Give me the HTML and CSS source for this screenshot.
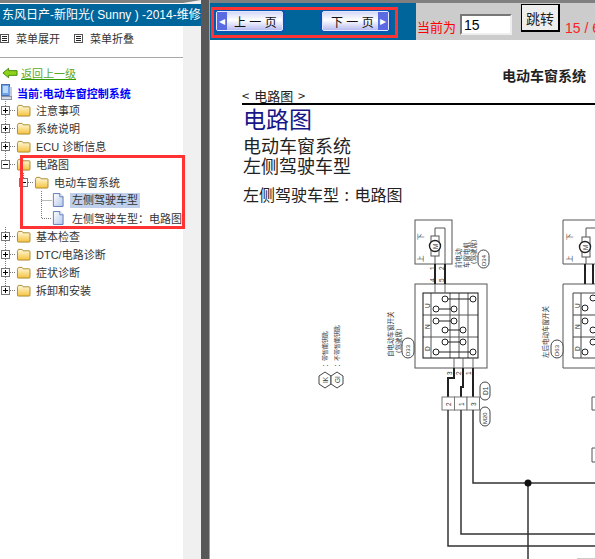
FILE: index.html
```html
<!doctype html>
<html lang="zh">
  <head>
    <meta charset="UTF-8" />
    <title>电动车窗系统</title>
    <link rel="stylesheet" href="styles.css">
  </head>
  <body>
    <svg class="defs" width="0" height="0">
      <defs>
        <linearGradient id="folderFill" x1="0" y1="0" x2="0" y2="1">
          <stop offset="0" stop-color="#fffbe0" />
          <stop offset="1" stop-color="#f5c23c" />
        </linearGradient>
        <linearGradient id="pageFill" x1="0" y1="0" x2="1" y2="1">
          <stop offset="0" stop-color="#ffffff" />
          <stop offset="1" stop-color="#b4c8ec" />
        </linearGradient>
        <symbol id="folder" viewBox="0 0 16 14">
          <path d="M1.500 3.500 L2.500 1.500 H6.500 L7.500 3 H14 Q15 3 15 4 V12 Q15 13 14 13 H2.500 Q1.500 13 1.500 12 Z" fill="url(#folderFill)" stroke="#a8862c" />
        </symbol>
        <symbol id="page" viewBox="0 0 13 15">
          <path d="M1.500 .5 H8.500 L12 4 V14.500 H1.500 Z" fill="url(#pageFill)" stroke="#5a76b4" />
          <path d="M8.500 .5 V4 H12" fill="#fff" stroke="#5a76b4" />
        </symbol>
        <symbol id="menuBox" viewBox="0 0 9 9">
          <rect x=".5" y=".5" width="8" height="8" fill="#fff" stroke="#555" />
          <path d="M2 2.500 H7 M2 4.500 H7 M2 6.500 H7" stroke="#222" />
        </symbol>
        <symbol id="plus" viewBox="0 0 15 18">
          <path d="M4.500 0 V18 M9 9.500 H15" stroke="#777" stroke-dasharray="1 1" />
          <rect x=".5" y="5.500" width="8" height="8" fill="#fff" stroke="#777" />
          <path d="M2 9.500 H7 M4.500 7 V12" stroke="#000" />
        </symbol>
        <symbol id="plusLast" viewBox="0 0 15 18">
          <path d="M4.500 0 V9 M9 9.500 H15" stroke="#777" stroke-dasharray="1 1" />
          <rect x=".5" y="5.500" width="8" height="8" fill="#fff" stroke="#777" />
          <path d="M2 9.500 H7 M4.500 7 V12" stroke="#000" />
        </symbol>
        <symbol id="minus" viewBox="0 0 15 18">
          <path d="M4.500 0 V6 M9 9.500 H15" stroke="#777" stroke-dasharray="1 1" />
          <rect x=".5" y="5.500" width="8" height="8" fill="#fff" stroke="#777" />
          <path d="M2 9.500 H7" stroke="#000" />
        </symbol>
        <symbol id="branch" viewBox="0 0 12 18">
          <path d="M1.500 0 V18 M1.500 9.500 H12" stroke="#777" stroke-dasharray="1 1" />
        </symbol>
        <symbol id="branchLast" viewBox="0 0 12 18">
          <path d="M1.500 0 V9.500 H12" fill="none" stroke="#777" stroke-dasharray="1 1" />
        </symbol>
      </defs>
    </svg>

    <aside class="sidebar">
      <div class="title-bar">东风日产-新阳光( Sunny ) -2014-维修手册</div>
      <div class="menu-tools">
        <span class="menu-tool"><svg width="9" height="9"><use href="#menuBox" /></svg>菜单展开</span>
        <span class="menu-tool"><svg width="9" height="9"><use href="#menuBox" /></svg>菜单折叠</span>
      </div>
      <div class="back-row">
        <svg width="16" height="12" viewBox="0 0 17 12">
          <path d="M1 6 L7 1 V3.500 H16 V8.500 H7 V11 Z" fill="#8fd21a" stroke="#3c8a00" />
        </svg>
        <a class="back-link" href="#">返回上一级</a>
      </div>
      <div class="current-row">
        <svg width="15" height="18" viewBox="0 0 15 18">
          <rect x="1.500" y=".5" width="8" height="11" fill="#6fa4ea" stroke="#4a70b0" />
          <rect x="3" y="2" width="5" height="7" fill="#bcd8fa" />
          <rect x="9.500" y="3" width="2.500" height="10" fill="#c2cce0" />
          <rect x="1.500" y="12.500" width="10" height="3" fill="#d8dce6" stroke="#8a92a8" />
        </svg>
        <strong>当前:电动车窗控制系统</strong>
      </div>

      <ul class="tree">
        <li class="node"><svg class="toggle" width="15" height="18"><use href="#plus" /></svg><svg class="folder" width="15" height="13"><use href="#folder" /></svg>注意事项</li>
        <li class="node"><svg class="toggle" width="15" height="18"><use href="#plus" /></svg><svg class="folder" width="15" height="13"><use href="#folder" /></svg>系统说明</li>
        <li class="node"><svg class="toggle" width="15" height="18"><use href="#plus" /></svg><svg class="folder" width="15" height="13"><use href="#folder" /></svg>ECU 诊断信息</li>
        <li class="node"><svg class="toggle" width="15" height="18"><use href="#minus" /></svg><svg class="folder" width="15" height="13"><use href="#folder" /></svg>电路图</li>
        <li class="node node--child"><svg class="toggle" width="15" height="18"><use href="#minus" /></svg><svg class="folder" width="15" height="13"><use href="#folder" /></svg>电动车窗系统</li>
        <li class="node node--leaf"><svg class="branch" width="12" height="18"><use href="#branch" /></svg><svg class="page" width="12" height="14"><use href="#page" /></svg><span class="selected">左侧驾驶车型</span></li>
        <li class="node node--leaf"><svg class="branch" width="12" height="18"><use href="#branchLast" /></svg><svg class="page" width="12" height="14"><use href="#page" /></svg><span class="leaf-label">左侧驾驶车型：电路图</span></li>
        <li class="node"><svg class="toggle" width="15" height="18"><use href="#plus" /></svg><svg class="folder" width="15" height="13"><use href="#folder" /></svg>基本检查</li>
        <li class="node"><svg class="toggle" width="15" height="18"><use href="#plus" /></svg><svg class="folder" width="15" height="13"><use href="#folder" /></svg>DTC/电路诊断</li>
        <li class="node"><svg class="toggle" width="15" height="18"><use href="#plus" /></svg><svg class="folder" width="15" height="13"><use href="#folder" /></svg>症状诊断</li>
        <li class="node"><svg class="toggle" width="15" height="18"><use href="#plusLast" /></svg><svg class="folder" width="15" height="13"><use href="#folder" /></svg>拆卸和安装</li>
      </ul>
      <div class="tree-mark"></div>
    </aside>

    <div class="splitter"></div>

    <main class="viewer">
      <div class="toolbar">
        <div class="pager">
          <button class="page-button"><span class="arrow">◂</span><span class="page-label">上 一 页</span></button>
          <button class="page-button page-button--next"><span class="page-label">下 一 页</span><span class="arrow">▸</span></button>
          <div class="pager-mark"></div>
        </div>
        <div class="jump">
          <span class="jump-label">当前为</span>
          <input class="jump-input" value="15" />
          <button class="jump-button">跳转</button>
          <span class="jump-count">15 / 6</span>
        </div>
      </div>

      <article class="doc">
        <div class="doc-title">电动车窗系统</div>
        <div class="crumb">&lt; 电路图 &gt;</div>
        <h1>电路图</h1>
        <h2>电动车窗系统</h2>
        <h2>左侧驾驶车型</h2>
        <h3>左侧驾驶车型 : 电路图</h3>

        <svg class="diagram" width="385" height="344" viewBox="210 215 385 344">
          <g fill="none" stroke="#555" stroke-width="1">
            <!-- motor and switch, driver side -->
            <rect x="415" y="220" width="37" height="44" />
            <rect x="415" y="284" width="72" height="84" />
            <path d="M423 315 H478 M423 337 H478 M431 293 V358 M450 293 V358 M459 293 V358 M468 293 V358" stroke="#555" />
            <rect x="423" y="293" width="55" height="65" stroke="#111" />
            <path d="M445 299 H473 M436 309 H454 M436 321 H454 M445 330 H463 M445 342 H463 M436 352 H473" stroke="#222" />
            <g fill="#fff" stroke="#222">
              <circle cx="445" cy="299" r="3" />
              <circle cx="473" cy="299" r="3" />
              <circle cx="436" cy="309" r="3" />
              <circle cx="454" cy="309" r="3" />
              <circle cx="436" cy="321" r="3" />
              <circle cx="454" cy="321" r="3" />
              <circle cx="445" cy="330" r="3" />
              <circle cx="463" cy="330" r="3" />
              <circle cx="445" cy="342" r="3" />
              <circle cx="463" cy="342" r="3" />
              <circle cx="436" cy="352" r="3" />
              <circle cx="473" cy="352" r="3" />
            </g>
            <path d="M435 264 V252 M435 240 V228 H445 V264" />
            <rect x="431" y="236" width="8" height="20" fill="#fff" />
            <circle cx="435" cy="246" r="5.500" fill="#fff" stroke="#222" stroke-width="1.400" />
            <path d="M435 284 V293 M445 284 V293 M454 358 V368 M463 358 V368 M473 358 V368" stroke="#666" />
          </g>

          <g fill="none" stroke="#222" stroke-width="2">
            <path d="M435 264 V284 M445 264 V284" />
            <path d="M454 368 V378 H448 V397 M463 368 V387 H461 V397 M473 368 V397" />
          </g>

          <g fill="#fff" stroke="#777">
            <rect x="442" y="397" width="12.500" height="13" />
            <rect x="454.500" y="397" width="12.500" height="13" />
            <rect x="467" y="397" width="12.500" height="13" />
          </g>

          <g fill="none" stroke="#333" stroke-width="1.500">
            <path d="M448 410 V546 H595" />
            <path d="M461 410 V534 H595" />
            <path d="M473 410 V483 H595" />
            <path d="M528 483 V559" />
          </g>
          <circle cx="528" cy="483" r="3.500" fill="#111" />
          <path d="M577 558.500 H595" stroke="#ccc" />

          <g fill="none" stroke="#555">
            <!-- passenger side, cut off by the frame -->
            <path d="M595 220 H563 V264 H595 M595 284 H563 V368 H595" />
            <path d="M595 293 H573 V358 H595 M573 315 H595 M573 337 H595 M581 293 V358" stroke="#444" />
            <path d="M586 228 H595 M586 228 V238 M586 254 V264" />
            <rect x="582" y="237" width="8" height="20" fill="#fff" />
            <circle cx="585" cy="247" r="5.500" fill="#fff" stroke="#222" stroke-width="1.400" />
            <g fill="#fff" stroke="#222">
              <circle cx="593" cy="298" r="3" />
              <circle cx="585" cy="308" r="3" />
              <circle cx="585" cy="321" r="3" />
              <circle cx="593" cy="330" r="3" />
              <circle cx="593" cy="342" r="3" />
              <circle cx="585" cy="352" r="3" />
            </g>
            <path d="M595 397 H592 V410 H595 M595 448 H592 V462 H595" />
          </g>
          <path d="M585 264 V284 M593 264 V284" stroke="#222" stroke-width="2" />

          <g fill="#fff" stroke="#444">
            <path d="M325 372 L331 376 V384 L325 388 L319 384 V376 Z" />
            <path d="M337 372 L343 376 V384 L337 388 L331 384 V376 Z" />
            <rect x="402" y="338" width="12" height="20" rx="6" />
            <rect x="478" y="250" width="11" height="18" rx="5.500" />
            <rect x="480" y="382" width="10" height="18" rx="5" />
            <rect x="480" y="407" width="10" height="19" rx="5" />
            <rect x="551" y="340" width="12" height="18" rx="6" />
          </g>

          <g class="diagram-text">
            <text transform="translate(328 383) rotate(-90)">IK</text>
            <text transform="translate(340 383) rotate(-90)">GI</text>
            <text class="small" transform="translate(327 367) rotate(-90)">：带智能钥匙</text>
            <text class="small" transform="translate(339 367) rotate(-90)">：不带智能钥匙</text>
            <text transform="translate(393 357) rotate(-90)">自电动车窗开关</text>
            <text transform="translate(401 357) rotate(-90)">（驾驶席）</text>
            <text class="small" transform="translate(410 356) rotate(-90)">D33</text>
            <text transform="translate(461 268) rotate(-90)">前电动</text>
            <text transform="translate(469 268) rotate(-90)">车窗电机</text>
            <text transform="translate(476 268) rotate(-90)">（驾驶席）</text>
            <text class="small" transform="translate(486 266) rotate(-90)">D34</text>
            <text transform="translate(488 395) rotate(-90)">D1</text>
            <text class="small" transform="translate(487 424) rotate(-90)">M20</text>
            <text transform="translate(430 308) rotate(-90)">U</text>
            <text transform="translate(430 329) rotate(-90)">N</text>
            <text transform="translate(430 351) rotate(-90)">D</text>
            <text transform="translate(451 406) rotate(-90)">2</text>
            <text transform="translate(464 406) rotate(-90)">1</text>
            <text transform="translate(476 406) rotate(-90)">3</text>
            <text transform="translate(548 358) rotate(-90)">左后电动车窗开关</text>
            <text class="small" transform="translate(559 356) rotate(-90)">D63</text>
            <text transform="translate(580 308) rotate(-90)">U</text>
            <text transform="translate(580 329) rotate(-90)">N</text>
            <text transform="translate(580 351) rotate(-90)">D</text>
            <text transform="translate(423 240) rotate(-90)">下</text>
            <text transform="translate(423 262) rotate(-90)">上</text>
            <text transform="translate(572 240) rotate(-90)">下</text>
            <text transform="translate(572 262) rotate(-90)">上</text>
            <text transform="translate(438 249) rotate(-90)">M</text>
            <text transform="translate(588 250) rotate(-90)">M</text>
            <text transform="translate(435 282) rotate(-90)">4</text>
            <text transform="translate(444 282) rotate(-90)">5</text>
            <text transform="translate(435 270) rotate(-90)">1</text>
            <text transform="translate(444 270) rotate(-90)">2</text>
            <text transform="translate(452 375) rotate(-90)">3</text>
            <text transform="translate(461 375) rotate(-90)">2</text>
            <text transform="translate(471 375) rotate(-90)">1</text>
          </g>
        </svg>
      </article>
    </main>
  </body>
</html>
```
FILE: styles.css
```css
* {
  box-sizing: border-box;
}

html,
body {
  height: 100%;
  margin: 0;
  overflow: hidden;
}

body {
  display: flex;
  background-color: #fff;
  color: #333;
  font-family: "Liberation Sans", "Noto Sans CJK SC", sans-serif;
  font-size: 11px;
}

.defs {
  position: absolute;
}

/* left frame */

.sidebar {
  position: relative;
  flex: none;
  width: 201px;
  height: 559px;
  border-top: 3px solid #808080;
  border-right: 18px solid #f0f0f0;
}

.title-bar {
  width: 201px;
  height: 22px;
  margin-top: 1px;
  padding-left: 2px;
  background-color: #00659b;
  color: #fff;
  font-size: 12px;
  line-height: 22px;
  white-space: nowrap;
  overflow: hidden;
}

.menu-tools {
  display: flex;
  gap: 14px;
  height: 32px;
  padding-top: 2px;
  border-bottom: 1px solid #a8a8a8;
}

.menu-tool {
  display: flex;
  align-items: center;
  gap: 7px;
  height: 20px;
}

.back-row {
  display: flex;
  align-items: center;
  gap: 3px;
  height: 16px;
  margin-top: 7px;
  padding-left: 2px;
}

.back-link {
  color: #5aa82a;
  text-decoration-color: #2e9a00;
}

.current-row {
  display: flex;
  align-items: center;
  gap: 2px;
  height: 18px;
  margin-top: 3px;
  margin-bottom: -1px;
  color: #0000ff;
  white-space: nowrap;
}

.tree {
  margin: 0;
  padding: 0;
  list-style: none;
}

.node {
  display: flex;
  align-items: center;
  height: 18px;
  padding-left: 1px;
  white-space: nowrap;
}

.node--child {
  padding-left: 19px;
}

.node--leaf {
  padding-left: 40px;
}

.toggle,
.branch {
  flex: none;
}

.folder {
  flex: none;
  margin-right: 5px;
}

.page {
  flex: none;
  margin-right: 6px;
}

.selected {
  height: 15px;
  padding: 0 2px;
  background-color: #c0d0ea;
  line-height: 15px;
}

.leaf-label {
  padding: 0 2px;
}

.tree-mark {
  position: absolute;
  top: 152px;
  left: 20px;
  width: 165px;
  height: 74px;
  border: 3px solid #ff3333;
}

.splitter {
  flex: none;
  width: 9px;
  border-left: 8px solid #585858;
  border-right: 1px solid #a0a0a0;
  background-color: #808080;
}

/* right frame */

.viewer {
  flex: 1;
  min-width: 0;
  height: 559px;
  overflow: hidden;
  border-top: 3px solid #808080;
}

.toolbar {
  display: flex;
  height: 37px;
  background-color: #00659b;
}

.pager {
  position: relative;
  display: flex;
  flex: none;
  gap: 39px;
  width: 206px;
  padding: 8px 0 0 6px;
}

.page-button {
  display: flex;
  align-items: center;
  width: 67px;
  height: 20px;
  padding: 0;
  background: linear-gradient(#d6d8f8, #ffffff 45%, #b8bcf0);
  border: 1px solid #e4e8ff;
  border-radius: 2px;
  box-shadow: 0 0 0 2px #0a56b4;
  color: #111;
  font-family: inherit;
  font-size: 12px;
}

.page-label {
  margin-left: 7px;
}

.page-button--next .page-label {
  margin-left: 8px;
}

.arrow {
  display: flex;
  flex: none;
  align-items: center;
  justify-content: center;
  width: 10px;
  height: 18px;
  background-color: #5a6ae0;
  color: #fff;
  font-size: 12px;
}

.page-button--next .arrow {
  margin-left: auto;
}

.pager-mark {
  position: absolute;
  top: 4px;
  left: 1px;
  width: 187px;
  height: 31px;
  border: 3px solid #ff3333;
}

.jump {
  display: flex;
  flex: 1;
  align-items: flex-start;
  background-color: #cccccc;
  white-space: nowrap;
}

.jump-label {
  margin: 15px 4px 0 1px;
  color: #ff0000;
  font-size: 13px;
  line-height: 20px;
}

.jump-input {
  width: 52px;
  height: 21px;
  margin-top: 11px;
  padding: 0 2px;
  background-color: #fff;
  border: 2px solid;
  border-color: #777 #eee #eee #777;
  font-family: inherit;
  font-size: 14px;
}

.jump-button {
  width: 39px;
  height: 28px;
  margin: 1px 5px 0 9px;
  padding: 0;
  background-color: #eeeeee;
  border: 1px solid #000;
  border-right-width: 2px;
  border-bottom-width: 2px;
  color: #222;
  font-family: inherit;
  font-size: 14px;
}

.jump-count {
  margin-top: 15px;
  color: #ff2222;
  font-size: 14px;
  line-height: 20px;
}

.doc {
  padding-top: 25px;
  background-color: #fff;
  color: #222;
  font-family: "Noto Sans CJK SC", sans-serif;
  white-space: nowrap;
}

.doc-title {
  padding-left: 292px;
  font-size: 14px;
  font-weight: bold;
  line-height: 20px;
}

.crumb {
  height: 19px;
  margin: 1px 0 0 32px;
  border-bottom: 2px solid #000;
  font-size: 13px;
  line-height: 20px;
  word-spacing: 2px;
}

h1,
h2,
h3 {
  margin: 0 0 0 33px;
  font-weight: normal;
}

h1 {
  color: #17178a;
  font-size: 23px;
  line-height: 26px;
}

h2 {
  font-size: 18px;
  line-height: 20px;
}

h1 + h2 {
  margin-top: 4px;
}

h3 {
  margin-top: 9px;
  font-size: 16px;
  line-height: 21px;
  word-spacing: 2px;
}

.diagram {
  display: block;
  margin-top: 10px;
}

.diagram-text text {
  fill: #333;
  font-family: "Liberation Sans", "Noto Sans CJK SC", sans-serif;
  font-size: 6.500px;
}

.diagram-text .small {
  font-size: 6px;
}
```
